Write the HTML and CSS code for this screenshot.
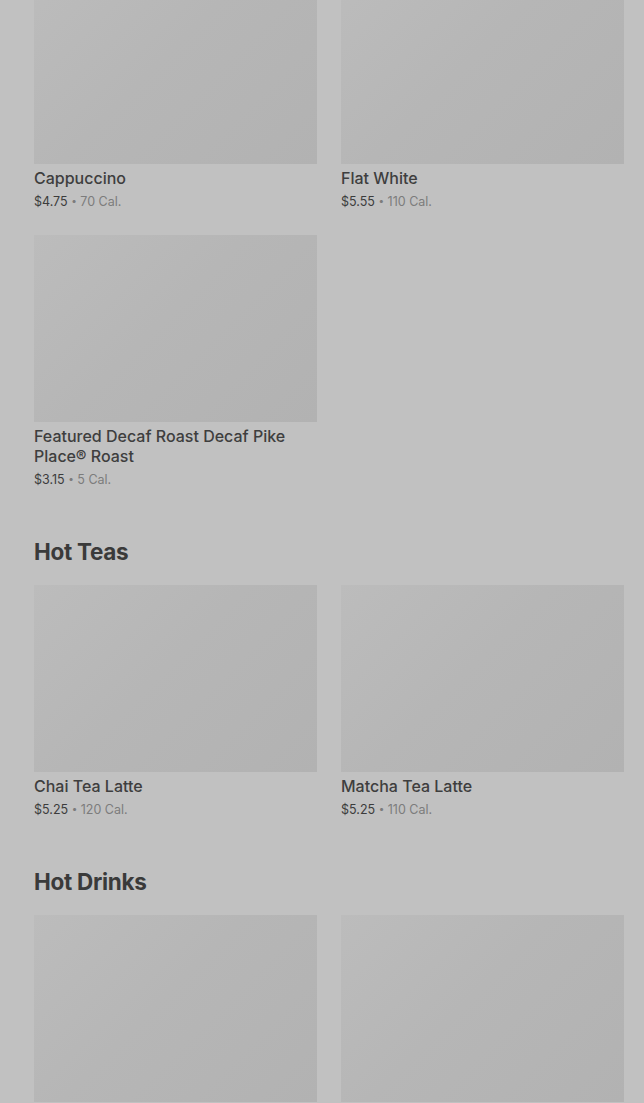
FILE: index.html
```html
<!DOCTYPE html>
<html>
<head>
    <meta charset="UTF-8">
    <meta name="viewport" content="width=device-width, initial-scale=1.0">
    <link rel="stylesheet" href="styles.css">
</head>
<body>
    <main class="menu">
        <section class="categoria">
            <div class="grade">
                <div class="produto">
                    <div class="foto"></div>
                    <h3 class="nome">Cappuccino</h3>
                    <p class="info"><span class="preco">$4.75</span> <span class="ponto">•</span> 70 Cal.</p>
                </div>
                <div class="produto">
                    <div class="foto"></div>
                    <h3 class="nome">Flat White</h3>
                    <p class="info"><span class="preco">$5.55</span> <span class="ponto">•</span> 110 Cal.</p>
                </div>
                <div class="produto">
                    <div class="foto"></div>
                    <h3 class="nome">Featured Decaf Roast Decaf Pike Place® Roast</h3>
                    <p class="info"><span class="preco">$3.15</span> <span class="ponto">•</span> 5 Cal.</p>
                </div>
            </div>
        </section>

        <section class="categoria">
            <h2 class="titulo">Hot Teas</h2>
            <div class="grade">
                <div class="produto">
                    <div class="foto"></div>
                    <h3 class="nome">Chai Tea Latte</h3>
                    <p class="info"><span class="preco">$5.25</span> <span class="ponto">•</span> 120 Cal.</p>
                </div>
                <div class="produto">
                    <div class="foto"></div>
                    <h3 class="nome">Matcha Tea Latte</h3>
                    <p class="info"><span class="preco">$5.25</span> <span class="ponto">•</span> 110 Cal.</p>
                </div>
            </div>
        </section>

        <section class="categoria">
            <h2 class="titulo">Hot Drinks</h2>
            <div class="grade">
                <div class="produto">
                    <div class="foto"></div>
                </div>
                <div class="produto">
                    <div class="foto"></div>
                </div>
            </div>
        </section>
    </main>
</body>
</html>
```

FILE: styles.css
```css
body {
    margin: 0;
    background-color: #c1c1c1;
    font-family: Inter, "Open Sans", sans-serif;
    color: #3c3c3c;
    overflow: hidden;
}
.menu {
    margin-top: -23px;
    padding: 0 20px 0 34px;
}
.categoria {
    margin-bottom: 50px;
}
.titulo {
    margin: 0 0 19px;
    font-size: 22.5px;
    line-height: 28px;
    font-weight: 700;
    letter-spacing: -0.3px;
    color: #3a3a3a;
}
.grade {
    display: grid;
    grid-template-columns: 283px 283px;
    column-gap: 24px;
    row-gap: 25px;
}
.foto {
    height: 187px;
    background: linear-gradient(135deg, #bcbcbc 0%, #b6b6b6 45%, #b2b2b2 100%);
    margin-bottom: 4px;
}
.nome {
    margin: 0;
    font-size: 16px;
    line-height: 20px;
    font-weight: 500;
    color: #3e3e3e;
}
.info {
    margin: 5px 0 0;
    font-size: 12.5px;
    line-height: 17px;
    color: #7c7c7c;
}
.preco {
    color: #3c3c3c;
}
.ponto {
    font-size: 10px;
    line-height: 10px;
    vertical-align: 2px;
}
```
